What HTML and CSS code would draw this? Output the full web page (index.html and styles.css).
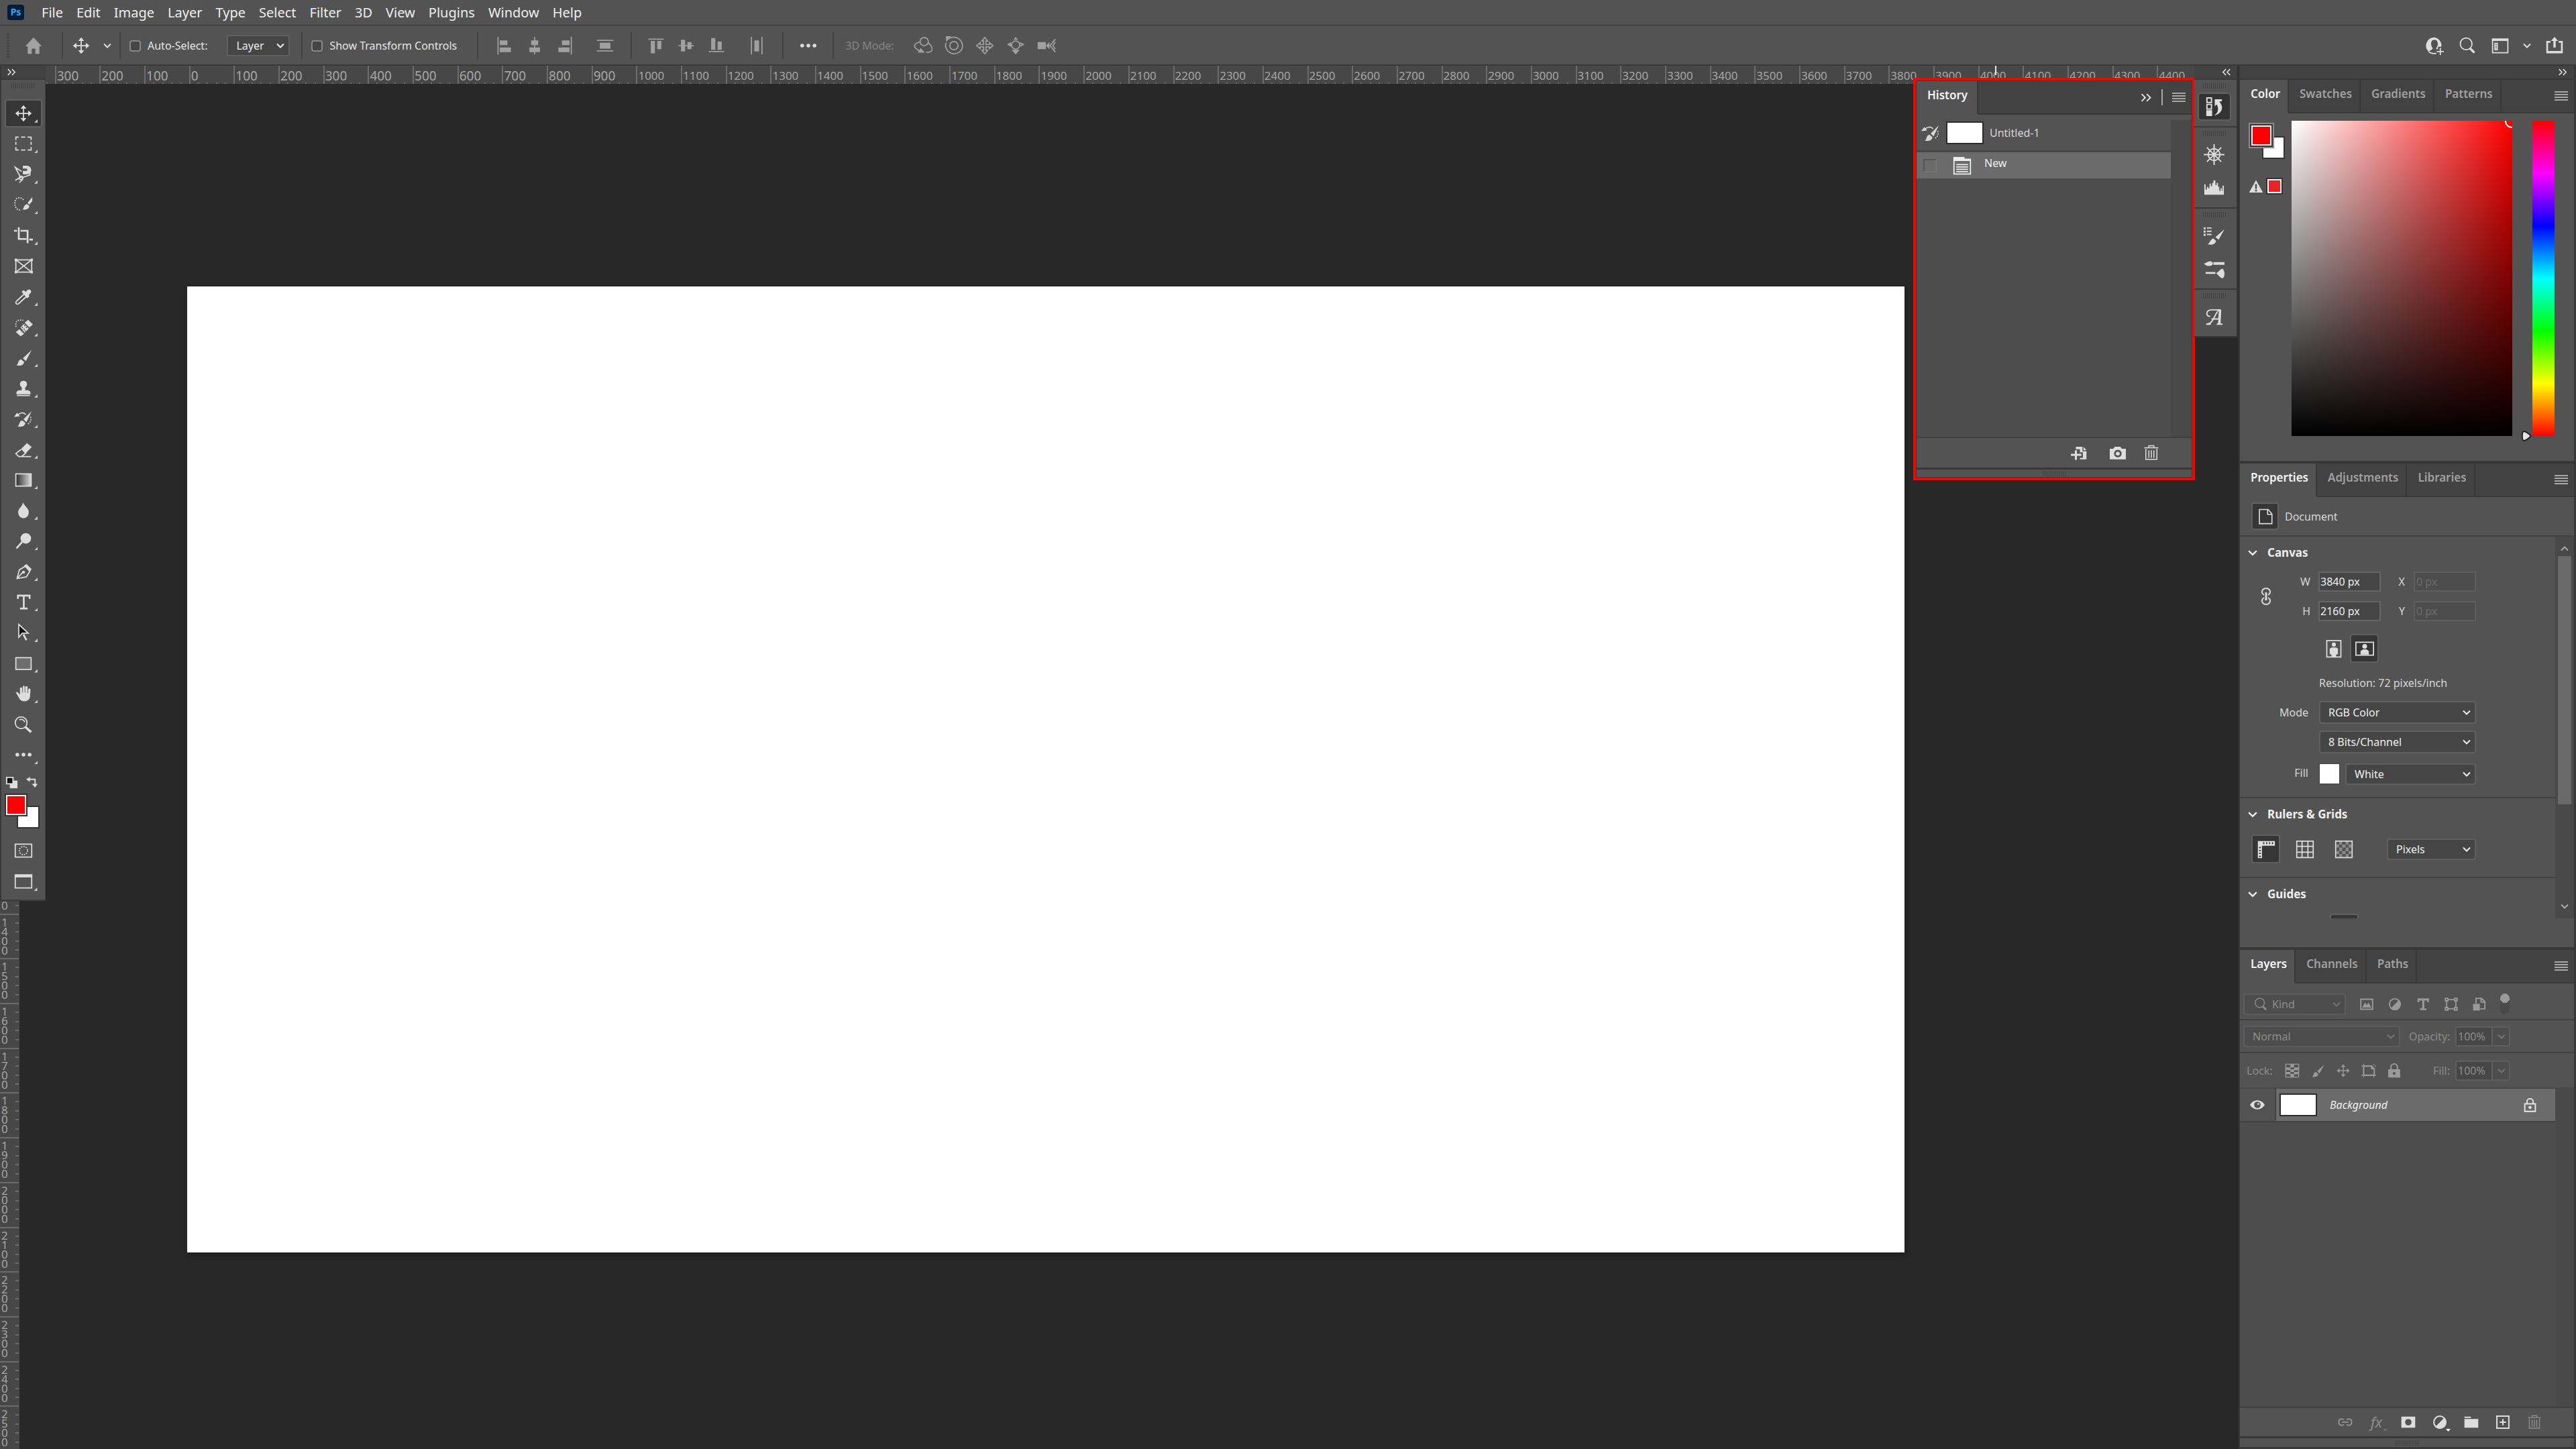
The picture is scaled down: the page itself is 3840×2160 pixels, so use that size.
FILE: index.html
```html
<!DOCTYPE html>
<html lang="en">
<head>
<meta charset="utf-8">
<title>Untitled-1</title>
<link rel="stylesheet" href="styles.css">
</head>
<body>
<svg class="sprite" aria-hidden="true">
  <symbol id="i-home" viewBox="0 0 32 32"><path d="M16 2L2 17h4v13h7v-9h6v9h7V17h4z"/></symbol>
  <symbol id="i-move" viewBox="0 0 32 32"><path d="M16 2l5 6h-4v7h7v-4l6 5-6 5v-4h-7v7h4l-5 6-5-6h4v-7H8v4l-6-5 6-5v4h7V8h-4z"/></symbol>
  <symbol id="i-chev" viewBox="0 0 12 12"><path class="ln" d="M1 3.500l5 5 5-5"/></symbol>
  <symbol id="i-al" viewBox="0 0 32 32"><path d="M4 1h2v30H4zM8 7h13v8H8zM8 19h19v8H8z"/></symbol>
  <symbol id="i-ac" viewBox="0 0 32 32"><path d="M15 1h2v6h5v8h-5v4h8v8h-8v4h-2v-4H7v-8h8v-4h-5V7h5z"/></symbol>
  <symbol id="i-ar" viewBox="0 0 32 32"><path d="M26 1h2v30h-2zM11 7h13v8H11zM5 19h19v8H5z"/></symbol>
  <symbol id="i-dh" viewBox="0 0 32 32"><path d="M2 6h28v2H2zM2 24h28v2H2zM7 11h18v10H7z"/></symbol>
  <symbol id="i-at" viewBox="0 0 32 32"><path d="M3 4h26v2H3zM7 8h7v21H7zM18 8h7v14h-7z"/></symbol>
  <symbol id="i-am" viewBox="0 0 32 32"><path d="M3 15h4V6h7v9h4v-5h7v5h4v2h-4v5h-7v-5h-4v9H7v-9H3z"/></symbol>
  <symbol id="i-ab" viewBox="0 0 32 32"><path d="M3 25h26v2H3zM7 3h7v20H7zM18 9h7v14h-7z"/></symbol>
  <symbol id="i-dv" viewBox="0 0 32 32"><path d="M6 1h2v30H6zM24 1h2v30h-2zM12 7h8v19h-8z"/></symbol>
  <symbol id="i-dots" viewBox="0 0 32 32"><circle cx="5.500" cy="16" r="3.200"/><circle cx="16" cy="16" r="3.200"/><circle cx="26.500" cy="16" r="3.200"/></symbol>
  <symbol id="i-orbit" viewBox="0 0 32 32"><circle class="ln" cx="18" cy="9" r="7"/><path class="ln" d="M11 10C2 11-1 17 4 21c2 2 4 2 5 4M25 11c5 5 8 9 6 13-1 3-6 4-10 3"/><path d="M12 20l7 8H7z"/></symbol>
  <symbol id="i-roll" viewBox="0 0 32 32"><path class="ln" d="M6 5C12 0 20 1 25 5c8 7 7 17 0 22-7 5-17 3-21-4-3-5-3-9-1-12"/><circle class="ln" cx="16" cy="16" r="7"/><path d="M2 0h9L3 10z"/></symbol>
  <symbol id="i-pan" viewBox="0 0 32 32"><path class="ln" d="M16 2l5 6h-3v6h6v-3l6 5-6 5v-3h-6v6h3l-5 6-5-6h3v-6H8v3l-6-5 6-5v3h6V8h-3z"/></symbol>
  <symbol id="i-slide" viewBox="0 0 32 32"><circle class="ln" cx="16" cy="15" r="7"/><path d="M16 1l4 5h-8zM1 14l7-4v8zM31 14l-7-4v8zM9 23h14l-7 8zM6 13h4v2H6zM22 13h4v2h-4z"/></symbol>
  <symbol id="i-cam" viewBox="0 0 32 32"><path d="M1 10h14v12H1zM15 16l6-6v12z"/><path class="ln" d="M31 5L22 16l9 11M31 10l-4 6 4 6"/></symbol>
  <symbol id="i-user" viewBox="0 0 32 32"><path fill-rule="evenodd" d="M15 2a14 14 0 0 0-9 24c3-2 7-3 7-6-4-4-4-14 3-14s7 10 3 14v2h3v-4h5l1-2A14 14 0 0 0 15 2z"/><path class="ln" d="M6 26c4 4 9 4 13 3M26 20v12M20 26h12"/></symbol>
  <symbol id="i-search" viewBox="0 0 32 32"><circle class="ln" cx="14" cy="13" r="10"/><path class="ln w4" d="M21 21l7 7"/></symbol>
  <symbol id="i-work" viewBox="0 0 32 32"><path class="ln" d="M3 5h26v23H3z"/><path d="M2 4h28v4H2zM6 11h6v13H6z"/><path fill="#535353" d="M8 13h2v2H8zM8 17h2v2H8zM8 21h2v1H8z"/></symbol>
  <symbol id="i-share" viewBox="0 0 32 32"><path d="M9 8H2v21h28V8h-7v3h4v14H5V11h4zM14 19V8h-4l6-7 6 7h-4v11z"/></symbol>
  <symbol id="i-marq" viewBox="0 0 32 32"><path class="ln" d="M3 10V5h5M12 5h7M23 5h6v5M29 13v5M29 22v5h-6M19 27h-7M8 27H3v-5M3 18v-5"/></symbol>
  <symbol id="i-lasso" viewBox="0 0 32 32"><path class="ln" d="M13 11L2 4l9 17-9 5M12 22l15-5v-5M15 24l-6 6"/><circle class="ln" cx="12" cy="22" r="3"/><path d="M15 1h6c11 0 11 15 0 15h-6v-6h6c2 0 2-4 0-4h-6z"/></symbol>
  <symbol id="i-quick" viewBox="0 0 32 32"><path class="dot" d="M16 8C12 3 4 3 2 9c-2 7 0 17 10 16"/><path d="M14 24c3-1 2-8 8-9l4 3c0 5-5 8-12 6zM23 13l8-10v7l-5 6z"/></symbol>
  <symbol id="i-crop" viewBox="0 0 32 32"><path class="ln w3" d="M8 2v20h13M0 8h5M11 8h12v21M26 23h6"/></symbol>
  <symbol id="i-frame" viewBox="0 0 32 32"><path class="ln" d="M3 6h27v21H3zM3 6l27 21M30 6L3 27"/><path d="M1 4h4v4H1zM28 4h4v4h-4zM1 25h4v4H1zM28 25h4v4h-4z"/></symbol>
  <symbol id="i-drop" viewBox="0 0 32 32"><path class="ln" d="M17 12L4 24c-3 3 1 7 4 4l13-12"/><path d="M13 8l3-3 4 3c3-4 6-5 8-3s1 5-3 8l1 3-4 3z"/></symbol>
  <symbol id="i-heal" viewBox="0 0 32 32"><path class="dot" d="M3 15V8c2-5 8-5 13-4"/><path d="M3 24l6-5 8 8-6 4zM18 8l6-5 8 8-6 5zM11 16l6-6 8 8-7 7z"/><path fill="#535353" d="M13 15h2v2h-2zM17 12h2v2h-2zM16 18h2v2h-2zM20 15h2v2h-2zM18 21h2v2h-2z"/></symbol>
  <symbol id="i-brush" viewBox="0 0 32 32"><path d="M4 29c4-2 2-9 8-10l5 4c0 6-7 8-13 6zM15 17L30 3 20 22z"/></symbol>
  <symbol id="i-stamp" viewBox="0 0 32 32"><path d="M16 3c8 0 7 9 3 11v5c9 0 9 2 9 7H4c0-5 0-7 9-7v-5C9 12 8 3 16 3zM5 27h22v2H5z"/></symbol>
  <symbol id="i-hist" viewBox="0 0 32 32"><path d="M6 29c4-2 2-9 8-10l5 4c0 6-7 8-13 6zM16 17L30 3 21 22zM0 13l5-7 5 6z"/><path class="ln" d="M7 9c4-3 9-4 13 0"/><path class="dot" d="M28 13c2 6-1 11-6 13"/></symbol>
  <symbol id="i-erase" viewBox="0 0 32 32"><path class="ln" d="M12 16l-9 7 5 5h21M13 28l8-7"/><path d="M12 15L22 5l8 7-11 11z"/></symbol>
  <symbol id="i-grad" viewBox="0 0 32 32"><linearGradient id="gg"><stop stop-color="#2a2a2a"/><stop offset="1" stop-color="#ddd"/></linearGradient><path fill="url(#gg)" stroke="currentColor" stroke-width="2" d="M3 6h26v21H3z"/></symbol>
  <symbol id="i-blur" viewBox="0 0 32 32"><path d="M15 2c3 7 10 10 10 17 0 6-4 10-9 10s-9-4-9-10C7 12 14 10 15 2z"/></symbol>
  <symbol id="i-dodge" viewBox="0 0 32 32"><circle cx="20" cy="12" r="9"/><path class="ln w3" d="M14 18L4 29"/></symbol>
  <symbol id="i-pen" viewBox="0 0 32 32"><path class="ln" d="M5 28L9 13l10-6 8 8-6 10zM5 28l10-11"/><circle cx="16" cy="17" r="2.500"/><path d="M17 6l4-3 9 9-4 4z"/></symbol>
  <symbol id="i-type" viewBox="0 0 32 32"><path d="M5 4h23v7h-3V7h-7v19h5v3H10v-3h5V7H8v4H5z"/></symbol>
  <symbol id="i-typeb" viewBox="0 0 32 32"><path d="M3 2h27v9h-4V7h-7v19h5v4H9v-4h5V7H7v4H3z"/></symbol>
  <symbol id="i-arrow" viewBox="0 0 32 32"><path class="ln w3" d="M16 19l5 10"/><path fill="#111" stroke="currentColor" stroke-width="2" d="M8 2l16 15H14l-6 7z"/></symbol>
  <symbol id="i-rect" viewBox="0 0 32 32"><path fill="#6e6e6e" stroke="currentColor" stroke-width="2" d="M3 6h26v20H3z"/></symbol>
  <symbol id="i-hand" viewBox="0 0 32 32"><path d="M3 14c2-2 4 0 7 4V7c0-2 4-2 4 0v7h1V4c0-2 3-2 3 0v10h1V5c0-2 4-2 4 0v10h1V9c0-2 4-2 4 0l-1 13c-2 8-12 9-17 4z"/></symbol>
  <symbol id="i-zoom" viewBox="0 0 32 32"><circle class="ln" cx="12" cy="13" r="10"/><path class="ln w4" d="M19 20l10 9"/><path class="ln" d="M9 8c4-2 8 0 9 4"/></symbol>
  <symbol id="i-mask" viewBox="0 0 32 32"><path class="ln" d="M2 5h28v22H2z"/><circle class="dot" cx="16" cy="16" r="7"/></symbol>
  <symbol id="i-screen" viewBox="0 0 32 32"><path class="ln" d="M2 5h28v22H2z"/><path d="M1 4h30v5H1z"/></symbol>
  <symbol id="i-mini" viewBox="0 0 20 20"><path d="M7 7h12v12H7z"/><path fill="#111" stroke="#ddd" stroke-width="2" d="M2 2h10v10H2z"/></symbol>
  <symbol id="i-swap" viewBox="0 0 20 20"><path class="ln" d="M5 5h10v8"/><path d="M1 5l6-4v8zM10 12h9l-4 6z"/></symbol>
  <symbol id="i-menu" viewBox="0 0 20 14"><path d="M0 0h20v2H0zM0 4h20v2H0zM0 8h20v2H0zM0 12h20v2H0z"/></symbol>
  <symbol id="i-dbl" viewBox="0 0 16 12"><path fill="none" stroke="currentColor" stroke-width="1.700" d="M2 1l5 5-5 5M9 1l5 5-5 5"/></symbol>
  <symbol id="i-histpanel" viewBox="0 0 32 32"><path class="ln" d="M5 2h7v7H5zM5 12h7v7H5z"/><path d="M4 21h9v9H4zM17 4h11v3l-4 1c8 8 4 19-8 21 6-4 8-10 4-17l-3 3z"/></symbol>
  <symbol id="i-wheel" viewBox="0 0 32 32"><circle class="ln" cx="16" cy="16" r="9"/><path class="ln" d="M16 0v32M0 16h32M5 5l22 22M27 5L5 27"/></symbol>
  <symbol id="i-histo" viewBox="0 0 32 32"><path d="M1 26V10h2v8h2v-4h2v2h2V9h2v4h2V8h2V4h3v7h2V8h2v6h2v6h2v-4h2v4h1v-8h2v14z"/></symbol>
  <symbol id="i-brushes" viewBox="0 0 32 32"><path d="M0 3h3v3H0zM5 3h7v2H5zM0 8h3v3H0zM5 8h7v2H5zM0 13h3v3H0zM5 13h7v2H5zM6 29c4-2 4-8 9-9l4 4c-1 5-7 7-13 5zM18 18L32 6l-9 16z"/></symbol>
  <symbol id="i-bset" viewBox="0 0 32 32"><path d="M0 7c4 0 7-5 12-3 3 2 3 4 0 6-5 2-9 0-12-3zM15 5h17v4H15zM3 20h15v3H3zM19 22c3-1 6-6 10-7 4 4 4 12 0 15-4-1-6-5-10-8z"/></symbol>
  <symbol id="i-glyph" viewBox="0 0 32 32"><path class="ln" d="M10 15c-7 1-7-9 1-10h15M25 5c-8 2-9 23-21 22M26 5c-3 6-3 14-1 22M12 19h12"/><path d="M24 5h3l-1 21h-4zM4 26h7v2H4zM20 26h9v2h-9z"/></symbol>
  <symbol id="i-state" viewBox="0 0 32 32"><path class="ln" d="M2 6h28v24H2z"/><path d="M1 1h19v3h11v4H1zM6 13h20v2H6zM6 17h20v2H6zM6 21h20v2H6zM6 25h20v2H6z"/></symbol>
  <symbol id="i-newdoc" viewBox="0 0 32 32"><path fill-rule="evenodd" d="M10 4h13v9h8v16H18v-3h6V15h-6V9h-8zM25 4l6 7h-6zM0 18h8v-7h4v7h9v4h-9v8H8v-8H0z"/></symbol>
  <symbol id="i-photo" viewBox="0 0 32 32"><path fill-rule="evenodd" d="M0 8h7l3-4h11l3 4h8v21H0zM16 10a7.500 7.500 0 1 0 .1 0zM16 13.500a4 4 0 1 1-.1 0z"/></symbol>
  <symbol id="i-trash" viewBox="0 0 32 32"><path class="ln" d="M2 6h28M11 5V2h10v3M5 8v21h22V8M11 11v15M16 11v15M21 11v15"/></symbol>
  <symbol id="i-warn" viewBox="0 0 32 32"><path fill-rule="evenodd" d="M16 2l15 27H1zM14 11v10h4V11zM14 23v4h4v-4z"/></symbol>
  <symbol id="i-doc" viewBox="0 0 32 32"><path class="ln" d="M5 3h16l7 8v18H5zM20 3v9h8"/></symbol>
  <symbol id="i-chain" viewBox="0 0 16 28"><path class="ln" d="M5 12C-1 8 3 2 8 2s9 6 3 10M5 16c-6 4-2 10 3 10s9-6 3-10"/><path class="ln w3" d="M8 8v12"/></symbol>
  <symbol id="i-port" viewBox="0 0 32 32"><path class="ln" d="M4 2h24v28H4z"/><circle cx="16" cy="9" r="3.500"/><path d="M9 16l3-2h8l3 2v9l-3 1v4h-8v-4l-3-1z"/></symbol>
  <symbol id="i-land" viewBox="0 0 32 32"><path class="ln" d="M1 5h30v22H1z"/><circle cx="16" cy="12" r="4"/><path d="M9 26v-6l4-3h6l4 3v6z"/></symbol>
  <symbol id="i-ruler" viewBox="0 0 32 32"><path d="M2 2h29v8H9v21H2z"/><path fill="#333" d="M11 4h2v3h-2zM16 4h2v3h-2zM21 4h2v3h-2zM26 4h2v3h-2zM4 12h3v2H4zM4 17h3v2H4zM4 22h3v2H4zM4 27h3v2H4z"/></symbol>
  <symbol id="i-grid" viewBox="0 0 32 32"><path class="ln" d="M2 2h28v28H2zM11 2v28M21 2v28M2 11h28M2 21h28"/></symbol>
  <symbol id="i-trans" viewBox="0 0 32 32"><path fill="#8a8a8a" d="M8 3h5v5H8zM19 3h5v5h-5zM3 8h5v5H3zM13 8h6v5h-6zM24 8h5v5h-5zM8 13h5v6H8zM19 13h5v6h-5zM3 19h5v5H3zM13 19h6v5h-6zM24 19h5v5h-5zM8 24h5v5H8zM19 24h5v5h-5z"/><path class="ln" d="M2 2h28v28H2z"/></symbol>
  <symbol id="i-pic" viewBox="0 0 32 32"><path class="ln w3" d="M2 4h28v24H2z"/><path d="M5 24l7-12 4 6 4-6 7 12z"/></symbol>
  <symbol id="i-adj" viewBox="0 0 32 32"><circle class="ln w3" cx="16" cy="16" r="13"/><path d="M26 6A14 14 0 0 1 6 26z"/></symbol>
  <symbol id="i-shape" viewBox="0 0 32 32"><path class="ln w3" d="M2 2h6v6H2zM24 2h6v6h-6zM2 24h6v6H2zM24 24h6v6h-6zM8 5h16M8 27h16M5 8v16M27 8v16"/></symbol>
  <symbol id="i-smart" viewBox="0 0 32 32"><path class="ln w3" d="M8 14V2h13l8 8v17H18M20 3v8h8"/><path d="M1 15h16v16H1z"/></symbol>
  <symbol id="i-checker" viewBox="0 0 32 32"><path class="ln" d="M2 2h28v28H2z"/><path d="M12 3h8v6h-8zM3 9h9v6H3zM20 9h9v6h-9zM12 13h8v6h-8zM3 19h9v5H3zM20 19h9v5h-9zM12 23h8v6h-8z"/></symbol>
  <symbol id="i-artb" viewBox="0 0 32 32"><path class="ln w3" d="M5 6h17l6 6v14H5z"/><path d="M21 5v8h8zM0 5h3v2H0zM29 5h3v2h-3zM0 25h3v2H0zM29 25h3v2h-3zM4 1h2v3H4zM26 1h2v3h-2zM4 28h2v3H4zM26 28h2v3h-2z"/></symbol>
  <symbol id="i-lockf" viewBox="0 0 32 32"><path class="ln w3" d="M9 14V9c0-10 14-10 14 0v5"/><path fill-rule="evenodd" d="M3 13h26v18H3zM16 19a3 3 0 1 0 .1 0z"/></symbol>
  <symbol id="i-lock" viewBox="0 0 32 32"><path class="ln w3" d="M9 13V8c0-9 14-9 14 0v5M4 13h24v17H4z"/><circle cx="16" cy="21" r="3.500"/></symbol>
  <symbol id="i-eye" viewBox="0 0 32 32"><path fill-rule="evenodd" d="M0 16C8 3 24 3 32 16 24 29 8 29 0 16zM16 9a7 7 0 1 0 .1 0z"/><circle cx="18" cy="14" r="2"/></symbol>
  <symbol id="i-link" viewBox="0 0 32 32"><path class="ln w3" d="M13 11C8 7 2 10 2 16s6 9 11 5M19 11c5-4 11-1 11 5s-6 9-11 5M9 16h14"/></symbol>
  <symbol id="i-masks" viewBox="0 0 32 32"><path fill-rule="evenodd" d="M1 4h30v24H1zM16 9a7 7 0 1 0 .1 0z"/></symbol>
  <symbol id="i-folder" viewBox="0 0 32 32"><path d="M1 4h14v3H1zM1 9h30v19H1z"/></symbol>
  <symbol id="i-new" viewBox="0 0 32 32"><path class="ln w3" d="M3 3h26v26H3zM16 9v14M9 16h14"/></symbol>
</svg>

<nav class="menubar">
  <b class="logo">Ps</b>
  <a href="#">File</a><a href="#">Edit</a><a href="#">Image</a><a href="#">Layer</a><a href="#">Type</a><a href="#">Select</a><a href="#">Filter</a><a href="#">3D</a><a href="#">View</a><a href="#">Plugins</a><a href="#">Window</a><a href="#">Help</a>
</nav>

<header class="options">
  <i class="vgrip"></i>
  <button class="ib home" aria-label="Home"><svg><use href="#i-home"/></svg></button>
  <i class="sep"></i>
  <button class="ib movebtn" aria-label="Move tool presets"><svg><use href="#i-move"/></svg><svg class="chev"><use href="#i-chev"/></svg></button>
  <i class="sep"></i>
  <label class="check"><input type="checkbox">Auto-Select:</label>
  <span class="sel layersel"><select aria-label="Auto-select target"><option>Layer</option></select><svg class="chev"><use href="#i-chev"/></svg></span>
  <i class="sep"></i>
  <label class="check"><input type="checkbox">Show Transform Controls</label>
  <i class="sep wide"></i>
  <div class="iconrow dim">
    <button class="ib" aria-label="Align left"><svg><use href="#i-al"/></svg></button>
    <button class="ib" aria-label="Align center"><svg><use href="#i-ac"/></svg></button>
    <button class="ib" aria-label="Align right"><svg><use href="#i-ar"/></svg></button>
    <button class="ib dist" aria-label="Distribute vertically"><svg><use href="#i-dh"/></svg></button>
  </div>
  <i class="sep"></i>
  <div class="iconrow dim">
    <button class="ib" aria-label="Align top"><svg><use href="#i-at"/></svg></button>
    <button class="ib" aria-label="Align middle"><svg><use href="#i-am"/></svg></button>
    <button class="ib" aria-label="Align bottom"><svg><use href="#i-ab"/></svg></button>
    <button class="ib dist" aria-label="Distribute horizontally"><svg><use href="#i-dv"/></svg></button>
  </div>
  <i class="sep"></i>
  <button class="ib more" aria-label="More"><svg><use href="#i-dots"/></svg></button>
  <i class="sep"></i>
  <span class="mode3d">3D Mode:</span>
  <div class="iconrow dim three">
    <button class="ib" disabled aria-label="Orbit"><svg><use href="#i-orbit"/></svg></button>
    <button class="ib" disabled aria-label="Roll"><svg><use href="#i-roll"/></svg></button>
    <button class="ib" disabled aria-label="Pan"><svg><use href="#i-pan"/></svg></button>
    <button class="ib" disabled aria-label="Slide"><svg><use href="#i-slide"/></svg></button>
    <button class="ib" disabled aria-label="Camera"><svg><use href="#i-cam"/></svg></button>
  </div>
  <div class="right">
    <button class="ib" aria-label="Account"><svg><use href="#i-user"/></svg></button>
    <button class="ib" aria-label="Search"><svg><use href="#i-search"/></svg></button>
    <button class="ib" aria-label="Workspace"><svg><use href="#i-work"/></svg></button>
    <button class="ib narrow" aria-label="Workspace menu"><svg class="chev"><use href="#i-chev"/></svg></button>
    <button class="ib" aria-label="Share"><svg><use href="#i-share"/></svg></button>
  </div>
</header>

<main class="work">
  <section class="doc">
    <div class="hruler"><div class="hcells">
      <span></span><span>300</span><span>200</span><span>100</span><span>0</span><span>100</span><span>200</span><span>300</span><span>400</span><span>500</span><span>600</span><span>700</span><span>800</span><span>900</span><span class="k">1000</span><span class="k">1100</span><span class="k">1200</span><span class="k">1300</span><span class="k">1400</span><span class="k">1500</span><span class="k">1600</span><span class="k">1700</span><span class="k">1800</span><span class="k">1900</span><span class="k">2000</span><span class="k">2100</span><span class="k">2200</span><span class="k">2300</span><span class="k">2400</span><span class="k">2500</span><span class="k">2600</span><span class="k">2700</span><span class="k">2800</span><span class="k">2900</span><span class="k">3000</span><span class="k">3100</span><span class="k">3200</span><span class="k">3300</span><span class="k">3400</span><span class="k">3500</span><span class="k">3600</span><span class="k">3700</span><span class="k">3800</span><span class="k">3900</span><span class="k">4000</span><span class="k">4100</span><span class="k">4200</span><span class="k">4300</span><span class="k">4400</span>
    </div><i class="cursor"></i></div>
    <div class="stage">
      <div class="vruler"><div class="vcells">
        <span>1300</span><span>1400</span><span>1500</span><span>1600</span><span>1700</span><span>1800</span><span>1900</span><span>2000</span><span>2100</span><span>2200</span><span>2300</span><span>2400</span><span>2500</span>
      </div></div>
      <div class="paste"><div class="artboard"></div></div>
    </div>

    <aside class="toolbar">
      <div class="dockhead"><svg class="dbl"><use href="#i-dbl"/></svg></div>
      <i class="grip"></i>
      <div class="tools">
        <button class="on" aria-label="Move"><svg><use href="#i-move"/></svg></button>
        <button aria-label="Marquee"><svg><use href="#i-marq"/></svg></button>
        <button aria-label="Lasso"><svg><use href="#i-lasso"/></svg></button>
        <button aria-label="Quick selection"><svg><use href="#i-quick"/></svg></button>
        <button aria-label="Crop"><svg><use href="#i-crop"/></svg></button>
        <button class="solo" aria-label="Frame"><svg><use href="#i-frame"/></svg></button>
        <button aria-label="Eyedropper"><svg><use href="#i-drop"/></svg></button>
        <button aria-label="Healing brush"><svg><use href="#i-heal"/></svg></button>
        <button aria-label="Brush"><svg><use href="#i-brush"/></svg></button>
        <button aria-label="Clone stamp"><svg><use href="#i-stamp"/></svg></button>
        <button aria-label="History brush"><svg><use href="#i-hist"/></svg></button>
        <button aria-label="Eraser"><svg><use href="#i-erase"/></svg></button>
        <button aria-label="Gradient"><svg><use href="#i-grad"/></svg></button>
        <button aria-label="Blur"><svg><use href="#i-blur"/></svg></button>
        <button aria-label="Dodge"><svg><use href="#i-dodge"/></svg></button>
        <button aria-label="Pen"><svg><use href="#i-pen"/></svg></button>
        <button aria-label="Type"><svg><use href="#i-type"/></svg></button>
        <button aria-label="Path selection"><svg><use href="#i-arrow"/></svg></button>
        <button aria-label="Rectangle"><svg><use href="#i-rect"/></svg></button>
        <button aria-label="Hand"><svg><use href="#i-hand"/></svg></button>
        <button class="solo" aria-label="Zoom"><svg><use href="#i-zoom"/></svg></button>
        <button aria-label="Edit toolbar"><svg><use href="#i-dots"/></svg></button>
      </div>
      <div class="minis">
        <button aria-label="Default colors"><svg><use href="#i-mini"/></svg></button>
        <button aria-label="Swap colors"><svg><use href="#i-swap"/></svg></button>
      </div>
      <div class="fgbg"><i class="bgc"></i><i class="fgc"></i></div>
      <div class="modes">
        <button class="solo" aria-label="Quick mask"><svg><use href="#i-mask"/></svg></button>
        <button aria-label="Screen mode"><svg><use href="#i-screen"/></svg></button>
      </div>
    </aside>

    <section class="history">
      <div class="tabs">
        <button class="tab on">History</button>
        <div class="tabtools"><svg class="dbl big"><use href="#i-dbl"/></svg><i class="bar"></i><svg class="menu"><use href="#i-menu"/></svg></div>
      </div>
      <div class="hbody">
        <div class="hlist">
          <div class="snap"><svg><use href="#i-hist"/></svg><i class="thumb"></i><span>Untitled-1</span></div>
          <div class="state"><i class="well"></i><svg><use href="#i-state"/></svg><span>New</span></div>
        </div>
        <i class="gutter"></i>
      </div>
      <div class="hfoot">
        <button class="ib first" aria-label="New document from state"><svg><use href="#i-newdoc"/></svg></button>
        <button class="ib" aria-label="New snapshot"><svg><use href="#i-photo"/></svg></button>
        <button class="ib" aria-label="Delete"><svg><use href="#i-trash"/></svg></button>
      </div>
      <div class="strip"><i class="grip"></i></div>
    </section>
  </section>

  <aside class="dock">
    <div class="dockhead"><svg class="dbl flip"><use href="#i-dbl"/></svg></div>
    <div class="group"><i class="grip"></i><button class="on" aria-label="History"><svg><use href="#i-histpanel"/></svg></button></div>
    <div class="group"><i class="grip"></i><button aria-label="Navigator"><svg><use href="#i-wheel"/></svg></button><button aria-label="Histogram"><svg><use href="#i-histo"/></svg></button></div>
    <div class="group"><i class="grip"></i><button aria-label="Brush settings"><svg><use href="#i-brushes"/></svg></button><button aria-label="Brushes"><svg><use href="#i-bset"/></svg></button></div>
    <div class="group"><i class="grip"></i><button aria-label="Glyphs"><svg><use href="#i-glyph"/></svg></button></div>
  </aside>

  <aside class="panels">
    <div class="dockhead end"><svg class="dbl"><use href="#i-dbl"/></svg></div>
    <section class="panel">
      <div class="tabs"><button class="tab on">Color</button><button class="tab">Swatches</button><button class="tab">Gradients</button><button class="tab">Patterns</button>
        <div class="tabtools"><svg class="menu"><use href="#i-menu"/></svg></div></div>
      <div class="color">
        <div class="chips">
          <div class="pair"><i class="bgc"></i><i class="fgc"></i></div>
          <div class="gamut"><svg><use href="#i-warn"/></svg><i></i></div>
        </div>
        <div class="field"><i class="ring"></i></div>
        <div class="hue"><svg class="knob" viewBox="0 0 16 16"><path d="M4 1C1 2 1 14 4 15c3 0 8-4 11-7C12 5 7 1 4 1z" fill="#e4e4e4" stroke="#222" stroke-width="2"/></svg></div>
      </div>
    </section>
    <section class="panel props">
      <div class="tabs"><button class="tab on">Properties</button><button class="tab">Adjustments</button><button class="tab">Libraries</button>
        <div class="tabtools"><svg class="menu"><use href="#i-menu"/></svg></div></div>
      <div class="docrow"><span class="tile on"><svg><use href="#i-doc"/></svg></span>Document</div>
      <div class="scroller">
        <div class="sections">
          <div class="sect canvas">
            <h2><svg class="chev"><use href="#i-chev"/></svg>Canvas</h2>
            <div class="dims">
              <svg class="chain"><use href="#i-chain"/></svg>
              <label for="w">W</label><input id="w" value="3840 px"><label for="x">X</label><input id="x" value="0 px" disabled>
              <label for="h">H</label><input id="h" value="2160 px"><label for="y">Y</label><input id="y" value="0 px" disabled>
            </div>
            <div class="orient"><button class="tile" aria-label="Portrait"><svg><use href="#i-port"/></svg></button><button class="tile on" aria-label="Landscape"><svg><use href="#i-land"/></svg></button></div>
            <p class="res">Resolution: 72 pixels/inch</p>
            <div class="form">
              <label for="mode">Mode</label><span class="sel"><select id="mode"><option>RGB Color</option></select><svg class="chev"><use href="#i-chev"/></svg></span>
              <span class="sel second"><select aria-label="Bit depth"><option>8 Bits/Channel</option></select><svg class="chev"><use href="#i-chev"/></svg></span>
              <label for="fill">Fill</label><div class="fillrow"><i></i><span class="sel"><select id="fill"><option>White</option></select><svg class="chev"><use href="#i-chev"/></svg></span></div>
            </div>
          </div>
          <div class="sect rulers">
            <h2><svg class="chev"><use href="#i-chev"/></svg>Rulers &amp; Grids</h2>
            <div class="rrow"><button class="tile on" aria-label="Rulers"><svg><use href="#i-ruler"/></svg></button><button class="tile" aria-label="Grid"><svg><use href="#i-grid"/></svg></button><button class="tile" aria-label="Transparency grid"><svg><use href="#i-trans"/></svg></button>
              <span class="sel"><select aria-label="Units"><option>Pixels</option></select><svg class="chev"><use href="#i-chev"/></svg></span></div>
          </div>
          <div class="sect guides">
            <h2><svg class="chev"><use href="#i-chev"/></svg>Guides</h2>
            <span class="tile on"></span>
          </div>
        </div>
        <div class="sbar"><svg class="chev up"><use href="#i-chev"/></svg><i></i><svg class="chev"><use href="#i-chev"/></svg></div>
      </div>
    </section>
    <section class="panel layers">
      <div class="tabs"><button class="tab on">Layers</button><button class="tab">Channels</button><button class="tab">Paths</button>
        <div class="tabtools"><svg class="menu"><use href="#i-menu"/></svg></div></div>
      <div class="lrow kind">
        <span class="sel off"><svg class="mag"><use href="#i-search"/></svg><select aria-label="Filter kind" disabled><option>Kind</option></select><svg class="chev"><use href="#i-chev"/></svg></span>
        <div class="filters">
          <button aria-label="Pixel layers"><svg><use href="#i-pic"/></svg></button><button aria-label="Adjustment layers"><svg><use href="#i-adj"/></svg></button><button aria-label="Type layers"><svg><use href="#i-typeb"/></svg></button><button aria-label="Shape layers"><svg><use href="#i-shape"/></svg></button><button aria-label="Smart objects"><svg><use href="#i-smart"/></svg></button>
        </div>
        <i class="toggle"></i>
      </div>
      <div class="lrow blend">
        <span class="sel off"><select aria-label="Blend mode" disabled><option>Normal</option></select><svg class="chev"><use href="#i-chev"/></svg></span>
        <label for="op">Opacity:</label><span class="num"><input id="op" value="100%" disabled><svg class="chev"><use href="#i-chev"/></svg></span>
      </div>
      <div class="lrow locks">
        <span class="lk">Lock:</span>
        <div class="filters tight">
          <button aria-label="Lock transparency"><svg><use href="#i-checker"/></svg></button><button aria-label="Lock pixels"><svg><use href="#i-brush"/></svg></button><button aria-label="Lock position"><svg><use href="#i-move"/></svg></button><button aria-label="Lock artboard"><svg><use href="#i-artb"/></svg></button><button aria-label="Lock all"><svg><use href="#i-lockf"/></svg></button>
        </div>
        <label for="fo">Fill:</label><span class="num"><input id="fo" value="100%" disabled><svg class="chev"><use href="#i-chev"/></svg></span>
      </div>
      <div class="lbody">
        <div class="llist"><div class="layer">
          <button class="eye" aria-label="Visibility"><svg><use href="#i-eye"/></svg></button>
          <div class="lsel"><i class="thumb"></i><em>Background</em><svg><use href="#i-lock"/></svg></div>
        </div></div>
        <i class="gutter"></i>
      </div>
      <div class="lfoot">
        <button class="dimmed" aria-label="Link layers"><svg><use href="#i-link"/></svg></button>
        <button class="dimmed fx">fx</button>
        <button aria-label="Add mask"><svg><use href="#i-masks"/></svg></button>
        <button class="adj" aria-label="New adjustment"><svg><use href="#i-adj"/></svg></button>
        <button aria-label="New group"><svg><use href="#i-folder"/></svg></button>
        <button aria-label="New layer"><svg><use href="#i-new"/></svg></button>
        <button class="dimmed" aria-label="Delete layer"><svg><use href="#i-trash"/></svg></button>
      </div>
      <div class="strip"><i class="grip"></i></div>
    </section>
  </aside>
</main>
</body>
</html>
```
FILE: styles.css
```css
:root {
  --panel: #535353;
  --tab: #424242;
  --edge: #383838;
  --list: #4d4d4d;
  --field: #454545;
  --line: #666;
  --text: #d6d6d6;
  --icon: #ddd;
}
* { box-sizing: border-box; }
html, body { height: 100%; }
body {
  margin: 0;
  display: flex;
  flex-direction: column;
  overflow: hidden;
  background: #282828;
  color: var(--text);
  font: 16px/20px "Noto Sans", "Open Sans", sans-serif;
}
button, input, select { font: inherit; color: inherit; margin: 0; }
button { background: none; border: 0; padding: 0; display: flex; align-items: center; justify-content: center; }
i { font-style: normal; display: block; flex: none; }
svg { fill: currentColor; display: block; flex: none; width: 28px; height: 28px; }
.sprite { position: absolute; width: 0; height: 0; }
.ln { fill: none; stroke: currentColor; stroke-width: 2; }
.w3 { stroke-width: 3; }
.w4 { stroke-width: 4; }
.dot { fill: none; stroke: currentColor; stroke-width: 2; stroke-dasharray: 2 2; }
.chev { width: 12px; height: 12px; }

/* Menu bar */
.menubar {
  height: 38px; flex: none;
  display: flex; align-items: center; gap: 20px;
  padding-left: 11px;
  background: var(--panel);
  border-bottom: 1px solid #303030;
  font-size: 20px;
}
.menubar a { color: #eee; text-decoration: none; }
.logo {
  width: 25px; height: 23px; margin-right: 6px;
  border-radius: 4px; background: #001e36; color: #31a8ff;
  font-size: 14px; line-height: 22px; text-align: center;
}

/* Options bar */
.options {
  height: 60px; flex: none;
  display: flex; align-items: center;
  padding-top: 2px;
  background: var(--panel);
  border-bottom: 2px solid var(--edge);
  color: #e6e6e6;
}
.vgrip { width: 4px; height: 34px; margin: 0 17px 0 10px; background: repeating-linear-gradient(#3e3e3e 0 2px, transparent 2px 4px); }
.sep { width: 2px; height: 40px; background: #404040; margin-right: 13px; }
.sep.wide { margin: 0 16px 0 30px; }
.ib { width: 45px; height: 40px; color: var(--icon); }
.home { width: 38px; margin-right: 23px; color: #a2a2a2; }
.movebtn { width: 58px; margin-right: 13px; gap: 19px; }
.check { display: flex; align-items: center; gap: 10px; }
.check input {
  appearance: none; width: 17px; height: 17px;
  border: 2px solid #888; border-radius: 4px; background: var(--field);
}
.sel {
  display: flex; align-items: center;
  height: 32px; padding-right: 6px;
  border: 2px solid #606060; border-radius: 4px;
  background: var(--field); color: #eee;
}
.sel select { appearance: none; flex: 1; min-width: 0; height: 100%; border: 0; outline: 0; background: none; padding: 0 0 0 12px; }
.layersel { width: 94px; margin: 0 17px 0 29px; }
.iconrow { display: flex; }
.dim .ib { color: #a0a0a0; }
.dim .dist { width: 60px; margin: 0 8px 0 8px; }
.more { width: 48px; margin: 0 12px 0 0; }
.mode3d { width: 97px; padding-left: 4px; color: #858585; }
.three .ib { width: 46px; }
.right { margin-left: auto; padding-right: 10px; display: flex; gap: 4px; }
.narrow { width: 28px; }

/* Workspace */
.work { flex: 1; min-height: 0; display: grid; grid-template-columns: minmax(0, 1fr) 66px 503px; }
.doc { position: relative; display: flex; flex-direction: column; min-height: 0; margin-right: -66px; }
.hruler { position: relative; height: 27px; flex: none; margin-right: 66px; overflow: hidden; background: #474747; padding: 0 0 2px 15px; color: #a6a6a6; }
.hcells { width: 3267px; height: 100%; display: grid; grid-template-columns: repeat(49, 1fr); }
.hcells span {
  padding-left: 3px; font-size: 19px; line-height: 30px;
  background:
    linear-gradient(#6c6c6c, #6c6c6c) 0 0 / 2px 100% no-repeat,
    repeating-linear-gradient(90deg, #6c6c6c 0 2px, transparent 2px 20%) 0 100% / 100% 5px no-repeat;
}
.hcells .k { font-size: 17px; }
.cursor { position: absolute; left: 2974px; top: 0; width: 2px; height: 14px; background: #e6e6e6; }
.stage { flex: 1; min-height: 0; display: flex; overflow: hidden; }
.vruler { width: 29px; flex: none; display: flex; flex-direction: column; justify-content: flex-end; background: #474747; color: #a6a6a6; padding-right: 1px; }
.vcells { height: 867px; margin-bottom: -2px; display: grid; grid-template-rows: repeat(13, 1fr); }
.vcells span {
  overflow: hidden; padding: 6px 16px 0 2px;
  font-size: 17px; line-height: 14px; word-break: break-all;
  background:
    linear-gradient(#6c6c6c, #6c6c6c) 0 0 / 100% 2px no-repeat,
    repeating-linear-gradient(#6c6c6c 0 2px, transparent 2px 20%) 100% 0 / 5px 100% no-repeat;
}
.paste { flex: 1; padding: 302px 0 0 250px; }
.artboard { width: 2560px; aspect-ratio: 16 / 9; background: #fff; box-shadow: 2px 3px 8px #1c1c1c; }

/* Shared panel parts */
.dockhead { height: 21px; flex: none; display: flex; align-items: center; background: var(--tab); border-bottom: 2px solid var(--edge); }
.dbl { width: 14px; height: 11px; color: #e6e6e6; }
.dbl.big { width: 18px; height: 13px; }
.flip { transform: scaleX(-1); }
.menu { width: 20px; height: 14px; color: #a8a8a8; }
.grip { width: 34px; height: 8px; background: repeating-linear-gradient(90deg, #404040 0 1px, transparent 1px 3px); }
.tabs { height: 50px; flex: none; display: flex; background: var(--tab); }
.tab {
  padding: 0 11px 6px 16px; align-items: center;
  border-right: 2px solid var(--edge); border-bottom: 2px solid var(--edge);
  color: #a0a0a0; font-size: 17px; font-weight: 600;
}
.tab.on { background: var(--panel); color: #f4f4f4; border-bottom-color: var(--panel); }
.tabtools { flex: 1; display: flex; align-items: center; justify-content: flex-end; gap: 14px; padding-right: 9px; border-bottom: 2px solid var(--edge); }
.bar { width: 2px; height: 24px; background: #a8a8a8; }
.strip { height: 14px; flex: none; display: flex; align-items: center; justify-content: center; border-top: 3px solid var(--edge); background: var(--panel); }
.thumb { width: 56px; height: 34px; background: #fff; border: 2px solid #2c2c2c; }
.gutter { width: 28px; background: #494949; }

/* Toolbar floats over the document */
.toolbar {
  position: absolute; left: 0; top: 0; width: 68px; height: 1245px;
  display: flex; flex-direction: column;
  background: var(--panel);
  border-left: 2px solid var(--edge); border-bottom: 2px solid #3c3c3c; border-right: 1px solid #404040;
}
.toolbar .dbl { margin-left: 8px; }
.toolbar > .grip { margin: 5px 0 14px 15px; }
.tools { height: 1002px; display: grid; grid-auto-rows: 1fr; }
.tools button, .modes button {
  position: relative; width: 56px; height: 42px; margin: 0 0 0 5px; align-self: center;
  border: 2px solid transparent; border-radius: 4px; color: var(--icon);
}
.modes button { margin: 0; }
.tools .on { background: #363636; border-color: #606060; }
.tools button::after, .modes button::after {
  content: ""; position: absolute; right: 5px; bottom: 5px; width: 5px; height: 5px;
  background: #ccc; clip-path: polygon(100% 0, 100% 100%, 0 100%);
}
.tools .solo::after, .modes .solo::after { display: none; }
.minis { display: flex; justify-content: space-between; padding: 9px 10px 7px 6px; color: var(--icon); }
.minis svg { width: 19px; height: 19px; }
.fgbg { position: relative; height: 52px; margin-bottom: 12px; }
.fgc, .bgc { position: absolute; border: 2px solid #333; }
.fgbg .fgc { left: 5px; top: 0; width: 34px; height: 34px; background: #f00; box-shadow: inset 0 0 0 2px #fff; }
.fgbg .bgc { left: 23px; top: 18px; width: 34px; height: 34px; background: #fff; }
.modes { display: flex; flex-direction: column; gap: 4px; }

/* History panel floats beside the dock */
.history {
  position: absolute; right: 65px; top: 18px; width: 420px; height: 600px;
  display: flex; flex-direction: column;
  border: 4px solid #f00; background: var(--edge); padding: 1px;
}
.history .tab { padding: 0 14px 6px 16px; }
.hbody { flex: 1; display: flex; padding-top: 0; background: var(--panel); }
.history .gutter { width: 31px; margin-top: 8px; }
.hlist { flex: 1; background: var(--list); }
.snap, .state { display: flex; align-items: center; }
.snap { height: 56px; padding: 0 0 0 7px; gap: 9px; background: var(--panel); border-bottom: 3px solid #464646; }
.state { height: 39px; padding-left: 10px; background: #6b6b6b; color: #eee; }
.well { width: 20px; height: 20px; margin-right: 24px; border: 2px solid #555; border-right-color: #757575; border-bottom-color: #757575; }
.state span { margin-left: 19px; align-self: flex-start; line-height: 32px; }
.hfoot { height: 46px; flex: none; display: flex; align-items: center; justify-content: flex-end; gap: 5px; padding-right: 38px; background: var(--panel); border-top: 2px solid #404040; }
.hfoot svg { width: 24px; height: 24px; }
.hfoot .first { margin-right: 8px; }

/* Icon dock */
.dock { position: relative; align-self: start; margin-right: 1px; border-bottom: 2px solid var(--edge); border-right: 2px solid var(--edge); background: var(--panel); }
.dock .dockhead { justify-content: flex-end; padding-right: 8px; }
.group { display: flex; flex-direction: column; align-items: center; padding: 5px 4px 0 0; border-bottom: 2px solid var(--edge); color: var(--icon); }
.group:last-child { border: 0; }
.group .grip { margin-bottom: 6px; }
.group button { width: 50px; height: 42px; margin-bottom: 8px; border: 2px solid transparent; border-radius: 5px; }
.group .on { background: #333; border-color: #606060; }
.group svg { width: 31px; height: 31px; }

/* Panel column */
.panels { position: relative; display: flex; flex-direction: column; min-height: 0; border-left: 2px solid var(--edge); border-right: 3px solid var(--edge); background: var(--panel); }
.dockhead.end { justify-content: flex-end; padding-right: 10px; }
.panel { flex: none; border-bottom: 4px solid var(--edge); }
.color { display: flex; height: 518px; padding: 11px 0 37px 13px; }
.chips { width: 64px; }
.pair { position: relative; height: 60px; margin-top: 3px; }
.pair .fgc { left: 2px; top: 2px; width: 34px; height: 34px; background: #f00; box-shadow: inset 0 0 0 2px #fff, 0 0 0 2px #8c8c8c; }
.pair .bgc { left: 20px; top: 20px; width: 34px; height: 34px; background: #fff; }
.gamut { display: flex; align-items: center; gap: 4px; margin-top: 22px; color: var(--icon); }
.gamut svg { width: 22px; height: 24px; }
.gamut i { width: 25px; height: 25px; background: #ee2224; border: 2px solid #333; box-shadow: inset 0 0 0 2px #fff; }
.field { position: relative; flex: 1; overflow: hidden; background: linear-gradient(transparent, #000), linear-gradient(90deg, #fff, #f00); }
.ring { position: absolute; right: -10px; top: -10px; width: 21px; height: 21px; border: 2px solid #fff; border-radius: 50%; }
.hue { position: relative; width: 33px; margin: 0 29px 0 30px; background: linear-gradient(#f00, #f0f, #00f, #0ff, #0f0, #ff0, #f00); }
.knob { position: absolute; left: -17px; bottom: -8px; width: 16px; height: 16px; }

.docrow { display: flex; align-items: center; height: 59px; padding: 0 0 0 17px; gap: 9px; border-bottom: 2px solid #404040; }
.tile { width: 43px; height: 43px; display: flex; align-items: center; justify-content: center; border: 2px solid transparent; border-radius: 4px; color: var(--icon); }
.tile.on { background: #363636; border-color: #606060; }
.docrow .tile { width: 41px; height: 41px; }
.docrow svg { width: 26px; height: 26px; }
.props { height: 725px; }
.scroller { height: 569px; display: flex; overflow: hidden; }
.sections { flex: 1; overflow: hidden; }
.sect { border-bottom: 2px solid #404040; padding-top: 12px; }
.sect h2 { display: flex; align-items: center; gap: 15px; margin: 0; padding-left: 12px; font-size: 17px; line-height: 24px; color: #eee; }
.sect h2 .chev { width: 14px; height: 14px; }
.dims { display: grid; grid-template: 30px 30px / 46px 58px 93px 49px 93px; gap: 14px 0; padding-left: 13px; margin-top: 16px; align-items: center; }
.dims label { text-align: right; padding-right: 13px; }
.dims input { min-width: 0; width: 100%; height: 30px; padding: 0 1px; border: 2px solid var(--line); background: var(--field); color: #eee; }
.dims input:disabled { background: var(--list); border-color: #5e5e5e; color: #6c6c6c; padding-left: 2px; }
.dims [for="w"], .dims [for="h"] { grid-column: 2; padding-right: 12px; }
.chain { grid-row: 1 / 3; width: 16px; height: 28px; margin-left: 18px; }
.orient { display: flex; gap: 3px; padding: 0 0 0 118px; margin-top: 19px; }
.res { margin: 20px 0 17px 118px; }
.form { display: grid; grid-template-columns: 102px 234px; align-items: center; row-gap: 10px; column-gap: 16px; }
.form label { text-align: right; }
.form .sel { height: 34px; }
.form .second { grid-column: 2; }
.fillrow { display: flex; gap: 8px; margin-top: 5px; }
.fillrow i { width: 31px; height: 31px; background: #fff; border: 1px solid #404040; }
.fillrow .sel { flex: 1; height: 32px; }
.canvas { height: 390px; }
.rulers { height: 119px; }
.rrow { display: flex; align-items: center; padding-left: 17px; gap: 15px; margin-top: 18px; }
.rrow .sel { width: 133px; margin-left: 28px; }
.guides { border: 0; }
.guides .tile { margin: 17px 0 0 134px; }
.sbar { width: 28px; display: flex; flex-direction: column; align-items: center; background: #494949; padding: 12px 0; color: #aaa; }
.sbar i { width: 20px; height: 370px; margin: 5px 0 auto; background: #696969; }
.up { transform: scaleY(-1); }

/* Layers */
.layers { flex: 1; min-height: 0; display: flex; flex-direction: column; border-bottom: 3px solid var(--edge); }
.lrow { display: flex; align-items: center; height: 49px; flex: none; padding-left: 5px; border-bottom: 2px solid #404040; color: #8c8c8c; }
.kind { height: 55px; padding-top: 8px; }
.off { background: #4d4d4d; border-color: #5c5c5c; color: #8c8c8c; }
.off select, .num input { color: #8c8c8c; opacity: 1; }
.off > .chev, .num .chev { color: #747474; }
.kind .sel { width: 153px; padding-left: 13px; }
.kind select { padding-left: 6px; }
.mag { width: 22px; height: 22px; }
.filters { display: flex; margin-left: 10px; }
.filters button { width: 42px; height: 32px; color: #9a9a9a; }
.filters svg { width: 20px; height: 20px; }
.toggle { width: 14px; height: 31px; margin-left: 10px; border-radius: 7px; background: radial-gradient(circle at 50% 7px, #9a9a9a 0 7px, #4a4a4a 7px); }
.blend .sel { width: 234px; margin-right: 13px; }
.num { display: flex; align-items: center; width: 82px; height: 30px; border: 2px solid #5e5e5e; border-radius: 4px; background: #4d4d4d; }
.num input { width: 54px; height: 100%; border: 0; border-right: 2px solid #5e5e5e; background: #474747; padding: 0 0 0 2px; }
.num .chev { margin-left: 7px; }
.lrow label { width: 69px; }
.locks { height: 53px; padding-left: 10px; border-bottom-color: #494949; }
.lk { width: 49px; }
.tight { margin: 0 auto 0 0; }
.tight button { width: 38px; }
.tight svg { width: 22px; height: 22px; }
.locks label { width: 33px; }
.locks .num { margin-right: 95px; }
.lbody { flex: 1; min-height: 0; display: flex; }
.llist { flex: 1; background: var(--list); }
.layer { display: flex; height: 50px; border-bottom: 2px solid #424242; background: var(--panel); }
.eye { width: 54px; border-right: 2px solid #424242; color: var(--icon); }
.eye svg { width: 22px; height: 22px; }
.lsel { flex: 1; display: flex; align-items: center; padding: 0 27px 0 5px; background: #6b6b6b; color: #f0f0f0; }
.lsel em { margin: 0 auto 0 19px; }
.lsel svg { width: 21px; height: 21px; color: #e4e4e4; }
.lfoot { height: 44px; flex: none; display: flex; justify-content: flex-end; padding-right: 36px; border-top: 2px solid #404040; color: #ddd; }
.lfoot button { position: relative; width: 47px; }
.lfoot svg { width: 22px; height: 22px; }
.lfoot .dimmed { color: #8f8f8f; }
.lfoot .fx { font-size: 21px; font-style: italic; }
.layers .strip { height: 16px; }
.fx::after, .adj::after { content: ""; position: absolute; right: 7px; bottom: 7px; width: 7px; height: 4px; background: #fff; clip-path: polygon(0 0, 100% 0, 50% 100%); }
.fx::after { background: #6c6c6c; }
```
